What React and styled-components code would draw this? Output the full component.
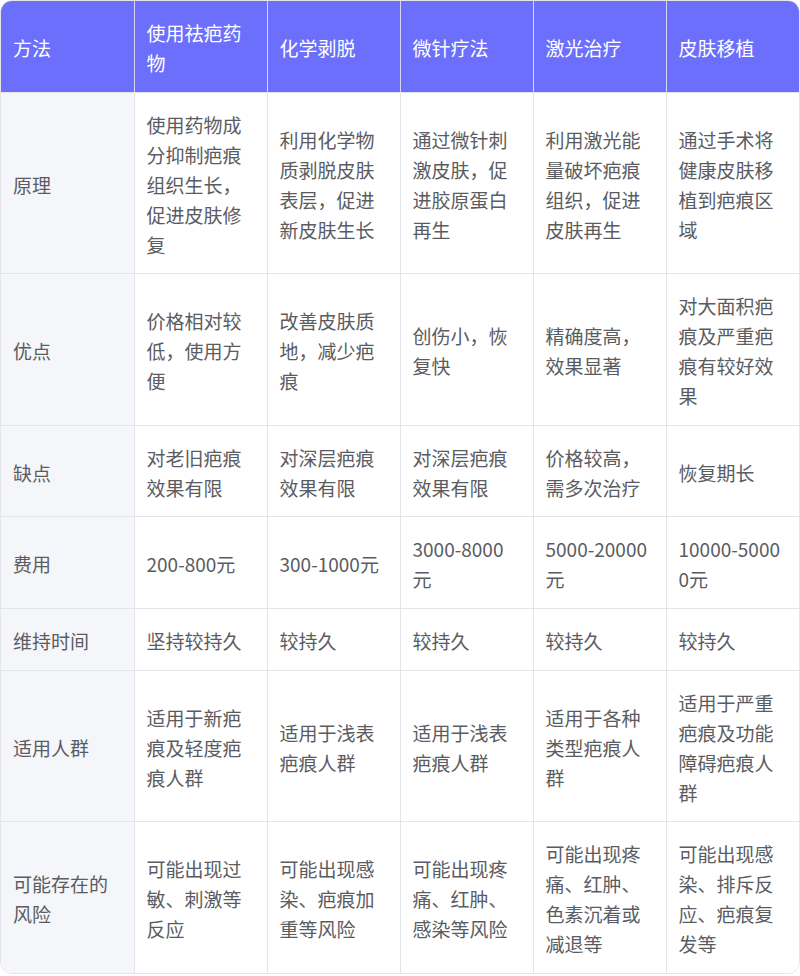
import React from "react";
import styled, { createGlobalStyle } from "styled-components";

const columns = ["方法", "使用祛疤药物", "化学剥脱", "微针疗法", "激光治疗", "皮肤移植"];

const rows = [
  {
    label: "原理",
    cells: [
      "使用药物成分抑制疤痕组织生长，促进皮肤修复",
      "利用化学物质剥脱皮肤表层，促进新皮肤生长",
      "通过微针刺激皮肤，促进胶原蛋白再生",
      "利用激光能量破坏疤痕组织，促进皮肤再生",
      "通过手术将健康皮肤移植到疤痕区域",
    ],
  },
  {
    label: "优点",
    cells: [
      "价格相对较低，使用方便",
      "改善皮肤质地，减少疤痕",
      "创伤小，恢复快",
      "精确度高，效果显著",
      "对大面积疤痕及严重疤痕有较好效果",
    ],
  },
  {
    label: "缺点",
    cells: ["对老旧疤痕效果有限", "对深层疤痕效果有限", "对深层疤痕效果有限", "价格较高，需多次治疗", "恢复期长"],
  },
  {
    label: "费用",
    cells: ["200-800元", "300-1000元", "3000-8000元", "5000-20000元", "10000-50000元"],
  },
  {
    label: "维持时间",
    cells: ["坚持较持久", "较持久", "较持久", "较持久", "较持久"],
  },
  {
    label: "适用人群",
    cells: [
      "适用于新疤痕及轻度疤痕人群",
      "适用于浅表疤痕人群",
      "适用于浅表疤痕人群",
      "适用于各种类型疤痕人群",
      "适用于严重疤痕及功能障碍疤痕人群",
    ],
  },
  {
    label: "可能存在的风险",
    cells: [
      "可能出现过敏、刺激等反应",
      "可能出现感染、疤痕加重等风险",
      "可能出现疼痛、红肿、感染等风险",
      "可能出现疼痛、红肿、色素沉着或减退等",
      "可能出现感染、排斥反应、疤痕复发等",
    ],
  },
];

const GlobalStyle = createGlobalStyle`
  body {
    margin: 0;
    background: #ffffff;
    font-family: "Noto Sans CJK SC", "Noto Sans", sans-serif;
  }
`;

const App = () => {
  return (
    <>
      <GlobalStyle />
      <Wrapper>
        <Table>
          <thead>
            <tr>
              {columns.map(c => (
                <HeadCell key={c}>{c}</HeadCell>
              ))}
            </tr>
          </thead>
          <tbody>
            {rows.map(row => (
              <Row key={row.label}>
                <LabelCell>{row.label}</LabelCell>
                {row.cells.map((text, i) => (
                  <Cell key={i}>{text}</Cell>
                ))}
              </Row>
            ))}
          </tbody>
        </Table>
      </Wrapper>
    </>
  );
};

export default App;

const Wrapper = styled.div`
  width: 800px;
  box-sizing: border-box;
  border: 1px solid #e3e5ea;
  border-radius: 12px;
  overflow: hidden;
`;

const Table = styled.table`
  width: 100%;
  table-layout: fixed;
  border-collapse: collapse;
  font-size: 19px;
  line-height: 30px;
  font-weight: 400;
`;

const baseCell = `
  padding: 17px 12px 13.6px 12px;
  text-align: left;
  vertical-align: middle;
  word-break: break-all;
  border-right: 1px solid #e3e5ea;
  border-bottom: 1px solid #e3e5ea;
  &:last-child {
    border-right: none;
  }
`;

const HeadCell = styled.th`
  ${baseCell}
  font-weight: 400;
  color: #ffffff;
  background: #6c6ffb;
  border-right-color: #d6d7f7;
`;

const Row = styled.tr`
  &:last-child td {
    border-bottom: none;
  }
`;

const LabelCell = styled.td`
  ${baseCell}
  color: #5a5c62;
  background: #f5f6fa;
`;

const Cell = styled.td`
  ${baseCell}
  color: #5a5c62;
  background: #ffffff;
`;
